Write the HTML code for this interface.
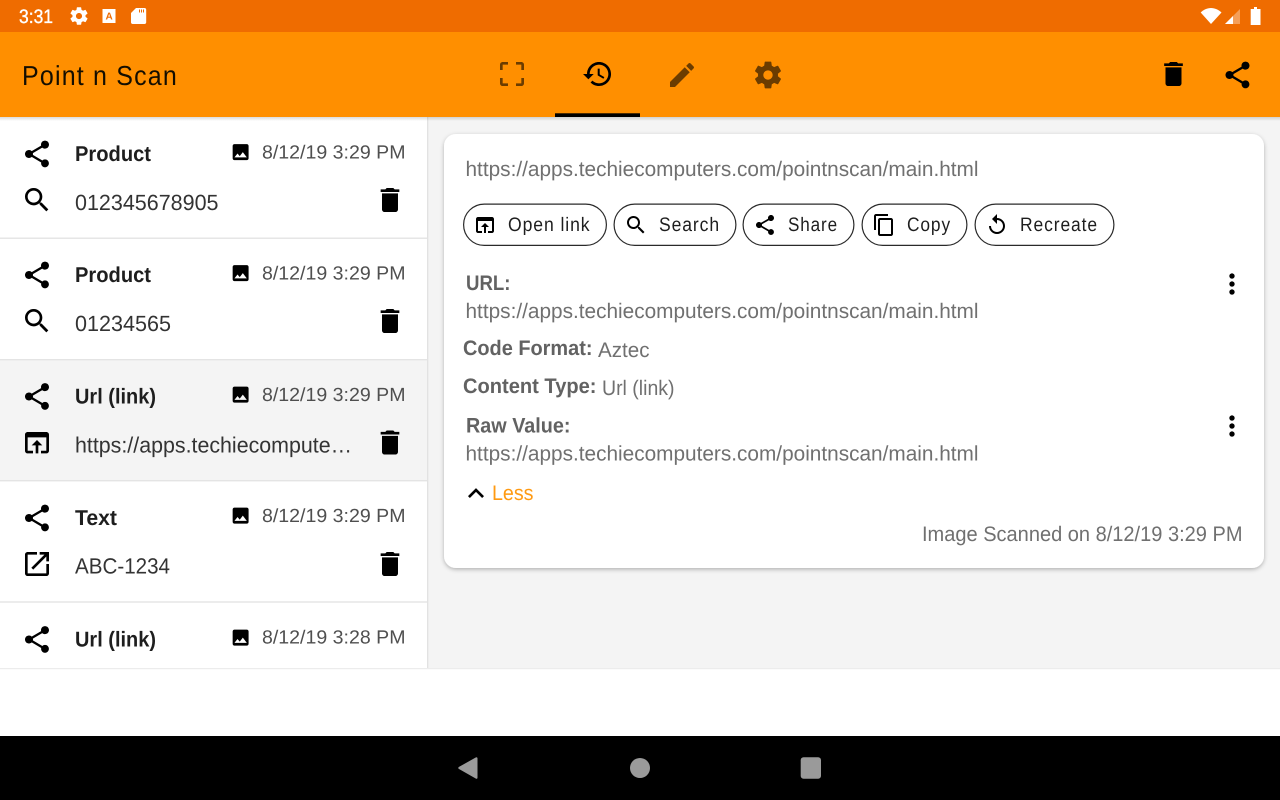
<!DOCTYPE html>
<html lang="en">
<head>
<meta charset="utf-8">
<title>Point n Scan</title>
<style>
html,body{margin:0;padding:0;width:1280px;height:800px;overflow:hidden;background:#fff}
svg{display:block;filter:blur(.3px)}
text{font-family:"Liberation Sans",sans-serif;text-rendering:geometricPrecision}
.h{font-size:21.5px;font-weight:bold;fill:#1e1e1e}
.d{font-size:19px;fill:#4f4f4f}
.v{font-size:22px;fill:#333}
.g{font-size:21px;fill:#707070}
.b{font-size:21px;font-weight:bold;fill:#626262}
.c{font-size:19.5px;fill:#1e1e1e;letter-spacing:1px}
</style>
</head>
<body>
<svg width="1280" height="800" viewBox="0 0 1280 800" xmlns="http://www.w3.org/2000/svg">
<defs>
<path id="share" d="M18 16.08c-.76 0-1.44.3-1.96.77L8.91 12.7c.05-.23.09-.46.09-.7s-.04-.47-.09-.7l7.05-4.11c.54.5 1.25.81 2.04.81 1.66 0 3-1.34 3-3s-1.34-3-3-3-3 1.34-3 3c0 .24.04.47.09.7L8.04 9.81C7.5 9.31 6.79 9 6 9c-1.66 0-3 1.34-3 3s1.34 3 3 3c.79 0 1.5-.31 2.04-.81l7.12 4.16c-.05.21-.08.43-.08.65 0 1.61 1.31 2.92 2.92 2.92 1.61 0 2.92-1.31 2.92-2.92s-1.31-2.92-2.92-2.92z"/>
<path id="search" d="M15.5 14h-.79l-.28-.27C15.41 12.59 16 11.11 16 9.5 16 5.91 13.09 3 9.5 3S3 5.91 3 9.5 5.91 16 9.5 16c1.61 0 3.09-.59 4.23-1.57l.27.28v.79l5 4.99L20.49 19l-4.99-5zm-6 0C7.01 14 5 11.99 5 9.5S7.01 5 9.5 5 14 7.01 14 9.5 11.99 14 9.5 14z"/>
<path id="del" d="M6 19c0 1.1.9 2 2 2h8c1.1 0 2-.9 2-2V7H6v12zM19 4h-3.5l-1-1h-5l-1 1H5v2h14V4z"/>
<path id="img" d="M21 19V5c0-1.1-.9-2-2-2H5c-1.1 0-2 .9-2 2v14c0 1.1.9 2 2 2h14c1.1 0 2-.9 2-2zM8.5 13.5l2.5 3.01L14.5 12l4.5 6H5l3.5-4.5z"/>
<path id="oib" d="M19 4H5c-1.11 0-2 .9-2 2v12c0 1.1.89 2 2 2h4v-2H5V8h14v10h-4v2h4c1.1 0 2-.9 2-2V6c0-1.1-.89-2-2-2zm-7 6l-4 4h3v6h2v-6h3l-4-4z"/>
<path id="oin" d="M19 19H5V5h7V3H5c-1.11 0-2 .9-2 2v14c0 1.1.89 2 2 2h14c1.1 0 2-.9 2-2v-7h-2v7zM14 3v2h3.59l-9.83 9.83 1.41 1.41L19 6.41V10h2V3h-7z"/>
<path id="hist" d="M13 3c-4.97 0-9 4.03-9 9H1l3.89 3.89.07.14L9 12H6c0-3.87 3.13-7 7-7s7 3.13 7 7-3.13 7-7 7c-1.93 0-3.68-.79-4.94-2.06l-1.42 1.42C8.27 19.99 10.51 21 13 21c4.97 0 9-4.03 9-9s-4.03-9-9-9zm-1 5v5l4.28 2.54.72-1.21-3.5-2.08V8H12z"/>
<path id="edit" d="M3 17.25V21h3.75L17.81 9.94l-3.75-3.75L3 17.25zM20.71 7.04c.39-.39.39-1.02 0-1.41l-2.34-2.34c-.39-.39-1.02-.39-1.41 0l-1.83 1.83 3.75 3.75 1.83-1.83z"/>
<path id="gear" d="M19.43 12.98c.04-.32.07-.64.07-.98s-.03-.66-.07-.98l2.11-1.65c.19-.15.24-.42.12-.64l-2-3.46c-.12-.22-.39-.3-.61-.22l-2.49 1c-.52-.4-1.08-.73-1.69-.98l-.38-2.65C14.46 2.18 14.25 2 14 2h-4c-.25 0-.46.18-.49.42l-.38 2.65c-.61.25-1.17.59-1.69.98l-2.49-1c-.23-.09-.49 0-.61.22l-2 3.46c-.13.22-.07.49.12.64l2.11 1.65c-.04.32-.07.65-.07.98s.03.66.07.98l-2.11 1.65c-.19.15-.24.42-.12.64l2 3.46c.12.22.39.3.61.22l2.49-1c.52.4 1.08.73 1.69.98l.38 2.65c.03.24.24.42.49.42h4c.25 0 .46-.18.49-.42l.38-2.65c.61-.25 1.17-.59 1.69-.98l2.49 1c.23.09.49 0 .61-.22l2-3.46c.12-.22.07-.49-.12-.64l-2.11-1.65zM12 15.5c-1.93 0-3.5-1.57-3.5-3.5s1.57-3.5 3.5-3.5 3.5 1.57 3.5 3.5-1.57 3.5-3.5 3.5z"/>
<path id="crop" d="M3 5v4h2V5h4V3H5c-1.1 0-2 .9-2 2zm2 10H3v4c0 1.1.9 2 2 2h4v-2H5v-4zm14 4h-4v2h4c1.1 0 2-.9 2-2v-4h-2v4zm0-16h-4v2h4v4h2V5c0-1.1-.9-2-2-2z"/>
<path id="more" d="M12 8c1.1 0 2-.9 2-2s-.9-2-2-2-2 .9-2 2 .9 2 2 2zm0 2c-1.1 0-2 .9-2 2s.9 2 2 2 2-.9 2-2-.9-2-2-2zm0 6c-1.1 0-2 .9-2 2s.9 2 2 2 2-.9 2-2-.9-2-2-2z"/>
<path id="copy" d="M16 1H4c-1.1 0-2 .9-2 2v14h2V3h12V1zm3 4H8c-1.1 0-2 .9-2 2v14c0 1.1.9 2 2 2h11c1.1 0 2-.9 2-2V7c0-1.1-.9-2-2-2zm0 16H8V7h11v14z"/>
<path id="replay" d="M12 5V1L7 6l5 5V7c3.31 0 6 2.69 6 6s-2.69 6-6 6-6-2.69-6-6H4c0 4.42 3.58 8 8 8s8-3.58 8-8-3.58-8-8-8z"/>
<path id="less" d="M12 8l-6 6 1.41 1.41L12 10.83l4.59 4.58L18 14z"/>
<filter id="sh" x="-5%" y="-5%" width="110%" height="112%"><feDropShadow dx="0" dy="1.5" stdDeviation="2" flood-color="#000" flood-opacity=".28"/></filter>
<linearGradient id="tb" x1="0" y1="0" x2="0" y2="1"><stop offset="0" stop-color="#000" stop-opacity=".14"/><stop offset="1" stop-color="#000" stop-opacity="0"/></linearGradient>
</defs>

<!-- backgrounds -->
<rect width="1280" height="800" fill="#fff"/>
<rect x="428" y="117" width="852" height="552" fill="#f4f4f4"/>
<rect x="0" y="360" width="427" height="120" fill="#f4f4f4"/>
<rect x="427" y="117" width="1.3" height="552" fill="#e2e2e2"/>
<g fill="#e4e4e4">
<rect y="237.5" width="427" height="1.4"/>
<rect y="359" width="427" height="1.4"/>
<rect y="480" width="427" height="1.4"/>
<rect y="601.3" width="427" height="1.4"/>
<rect y="668" width="1280" height="1.2" fill="#ececec"/>
</g>

<!-- status bar -->
<rect width="1280" height="32" fill="#ef6c00"/>
<text x="19" y="23" font-size="19.5" fill="#fff" stroke="#fff" stroke-width=".35" textLength="34" lengthAdjust="spacingAndGlyphs">3:31</text>
<use href="#gear" transform="translate(68.5 5.5) scale(.875)" fill="#fff"/>
<path d="M102.5 9h13v14h-13z" fill="#fff"/>
<text x="105.5" y="19.5" font-size="10" font-weight="bold" fill="#ef6c00">A</text>
<path d="M136 8h8.5c1 0 1.7.7 1.7 1.7V22.300c0 1-.7 1.700-1.700 1.700H132.700c-1 0-1.700-.7-1.700-1.700V13z" fill="#fff"/>
<path d="M139 9.500h1v3h-1zM141 9.500h1v3h-1zM143 9.500h1v3h-1z" fill="#ef6c00"/>
<path d="M1200.700 12.500C1203.500 9.800 1207 8 1211 8s7.500 1.800 10.500 4.500L1211 24z" fill="#fff"/>
<path d="M1225 24L1240 9v15z" fill="#fff" opacity=".35"/>
<path d="M1225 24l8-8v8z" fill="#fff"/>
<path d="M1254 7h3v2h3.500v16h-9.800V9h3.300z" fill="#fff"/>

<!-- app bar -->
<rect y="32" width="1280" height="85" fill="#ff8f00"/>
<rect y="117" width="1280" height="4" fill="url(#tb)"/>
<text x="22" y="85" font-size="27.5" fill="#140e00" letter-spacing="1.3" textLength="156" lengthAdjust="spacingAndGlyphs">Point n Scan</text>
<g transform="translate(496 58) scale(1.333)" fill="#000" opacity=".58"><use href="#crop"/></g>
<g transform="translate(581.700 58) scale(1.333)" fill="#000"><use href="#hist"/></g>
<g transform="translate(666 59) scale(1.333)" fill="#000" opacity=".58"><use href="#edit"/></g>
<g transform="translate(752 59) scale(1.333)" fill="#000" opacity=".58"><use href="#gear"/></g>
<rect x="555" y="113.300" width="85" height="3.700" fill="#000"/>
<g transform="translate(1157.500 58) scale(1.333)" fill="#000"><use href="#del"/></g>
<g transform="translate(1221.500 59) scale(1.333)" fill="#000"><use href="#share"/></g>

<!-- list row 1 -->
<g transform="translate(21 138) scale(1.333)"><use href="#share"/></g>
<text class="h" x="75" y="161" textLength="76" lengthAdjust="spacingAndGlyphs">Product</text>
<g transform="translate(230 141.500) scale(.885)"><use href="#img"/></g>
<text class="d" x="262" y="158.500" textLength="143.500" lengthAdjust="spacingAndGlyphs">8/12/19 3:29 PM</text>
<g transform="translate(21 184) scale(1.333)"><use href="#search"/></g>
<text class="v" x="75" y="210" textLength="143.500" lengthAdjust="spacingAndGlyphs">012345678905</text>
<g transform="translate(374 184) scale(1.333)"><use href="#del"/></g>

<!-- list row 2 -->
<g transform="translate(21 259) scale(1.333)"><use href="#share"/></g>
<text class="h" x="75" y="282" textLength="76" lengthAdjust="spacingAndGlyphs">Product</text>
<g transform="translate(230 262.500) scale(.885)"><use href="#img"/></g>
<text class="d" x="262" y="279.500" textLength="143.500" lengthAdjust="spacingAndGlyphs">8/12/19 3:29 PM</text>
<g transform="translate(21 305) scale(1.333)"><use href="#search"/></g>
<text class="v" x="75" y="331" textLength="96" lengthAdjust="spacingAndGlyphs">01234565</text>
<g transform="translate(374 305) scale(1.333)"><use href="#del"/></g>

<!-- list row 3 -->
<g transform="translate(21 380.500) scale(1.333)"><use href="#share"/></g>
<text class="h" x="75" y="403.500" textLength="81" lengthAdjust="spacingAndGlyphs">Url (link)</text>
<g transform="translate(230 384) scale(.885)"><use href="#img"/></g>
<text class="d" x="262" y="401" textLength="143.500" lengthAdjust="spacingAndGlyphs">8/12/19 3:29 PM</text>
<g transform="translate(21 426.700) scale(1.333)"><use href="#oib"/></g>
<text class="v" x="75" y="452.500" textLength="277" lengthAdjust="spacingAndGlyphs">https://apps.techiecompute…</text>
<g transform="translate(374 426.500) scale(1.333)"><use href="#del"/></g>

<!-- list row 4 -->
<g transform="translate(21 502) scale(1.333)"><use href="#share"/></g>
<text class="h" x="75" y="525" textLength="42" lengthAdjust="spacingAndGlyphs">Text</text>
<g transform="translate(230 505) scale(.885)"><use href="#img"/></g>
<text class="d" x="262" y="522" textLength="143.500" lengthAdjust="spacingAndGlyphs">8/12/19 3:29 PM</text>
<g transform="translate(21 548) scale(1.333)"><use href="#oin"/></g>
<text class="v" x="75" y="573.500" textLength="95" lengthAdjust="spacingAndGlyphs">ABC-1234</text>
<g transform="translate(374 548) scale(1.333)"><use href="#del"/></g>

<!-- list row 5 -->
<g transform="translate(21 623.500) scale(1.333)"><use href="#share"/></g>
<text class="h" x="75" y="646.500" textLength="81" lengthAdjust="spacingAndGlyphs">Url (link)</text>
<g transform="translate(230 627) scale(.885)"><use href="#img"/></g>
<text class="d" x="262" y="643.500" textLength="143.500" lengthAdjust="spacingAndGlyphs">8/12/19 3:28 PM</text>

<!-- card -->
<rect x="444" y="134" width="820" height="434" rx="12" fill="#fff" filter="url(#sh)"/>
<text class="g" x="465.500" y="176" textLength="513" lengthAdjust="spacingAndGlyphs">https://apps.techiecomputers.com/pointnscan/main.html</text>

<!-- chips -->
<g fill="#fff" stroke="#2a2a2a" stroke-width="1.200">
<rect x="463.600" y="204.100" width="142.800" height="41.300" rx="20.600"/>
<rect x="614.100" y="204.100" width="121.800" height="41.300" rx="20.600"/>
<rect x="743.100" y="204.100" width="110.800" height="41.300" rx="20.600"/>
<rect x="862.100" y="204.100" width="104.800" height="41.300" rx="20.600"/>
<rect x="975.100" y="204.100" width="138.800" height="41.300" rx="20.600"/>
</g>
<g transform="translate(473 213)"><use href="#oib"/></g>
<text class="c" x="508" y="231" textLength="82.500" lengthAdjust="spacingAndGlyphs">Open link</text>
<g transform="translate(624 213)"><use href="#search"/></g>
<text class="c" x="659" y="231" textLength="61" lengthAdjust="spacingAndGlyphs">Search</text>
<g transform="translate(753 213)"><use href="#share"/></g>
<text class="c" x="788" y="231" textLength="50" lengthAdjust="spacingAndGlyphs">Share</text>
<g transform="translate(872 213)"><use href="#copy"/></g>
<text class="c" x="907" y="231" textLength="44" lengthAdjust="spacingAndGlyphs">Copy</text>
<g transform="translate(985 213)"><use href="#replay"/></g>
<text class="c" x="1020" y="231" textLength="78" lengthAdjust="spacingAndGlyphs">Recreate</text>

<!-- details -->
<text class="b" x="466" y="290" textLength="44.500" lengthAdjust="spacingAndGlyphs">URL:</text>
<text class="g" x="465.500" y="318" textLength="513" lengthAdjust="spacingAndGlyphs">https://apps.techiecomputers.com/pointnscan/main.html</text>
<g transform="translate(1216 268) scale(1.333)"><use href="#more"/></g>
<text class="b" x="463" y="355" textLength="129.500" lengthAdjust="spacingAndGlyphs">Code Format:</text>
<text class="g" x="598" y="357" textLength="51.500" lengthAdjust="spacingAndGlyphs">Aztec</text>
<text class="b" x="463" y="393" textLength="133.500" lengthAdjust="spacingAndGlyphs">Content Type:</text>
<text class="g" x="602" y="395" textLength="72.500" lengthAdjust="spacingAndGlyphs">Url (link)</text>
<text class="b" x="466" y="432.500" textLength="104.500" lengthAdjust="spacingAndGlyphs">Raw Value:</text>
<text class="g" x="465.500" y="460.500" textLength="513" lengthAdjust="spacingAndGlyphs">https://apps.techiecomputers.com/pointnscan/main.html</text>
<g transform="translate(1216 410) scale(1.333)"><use href="#more"/></g>
<g transform="translate(460 477.500) scale(1.333)"><use href="#less"/></g>
<text x="492" y="500" font-size="21" fill="#ff9a12" textLength="41.500" lengthAdjust="spacingAndGlyphs">Less</text>
<text class="g" x="922" y="541" textLength="320.500" lengthAdjust="spacingAndGlyphs">Image Scanned on 8/12/19 3:29 PM</text>

<!-- nav bar -->
<rect y="736" width="1280" height="64" fill="#000"/>
<path d="M477.500 758.500v19c0 1.200-.8 1.600-1.800 1L459 769c-1-.6-1-1.500 0-2.100l16.700-9.400c1-.6 1.800-.2 1.800 1z" fill="#9a9a9a"/>
<circle cx="640" cy="768" r="10" fill="#9a9a9a"/>
<rect x="800.700" y="757.300" width="20.300" height="21.400" rx="2.800" fill="#9a9a9a"/>
</svg>
</body>
</html>
